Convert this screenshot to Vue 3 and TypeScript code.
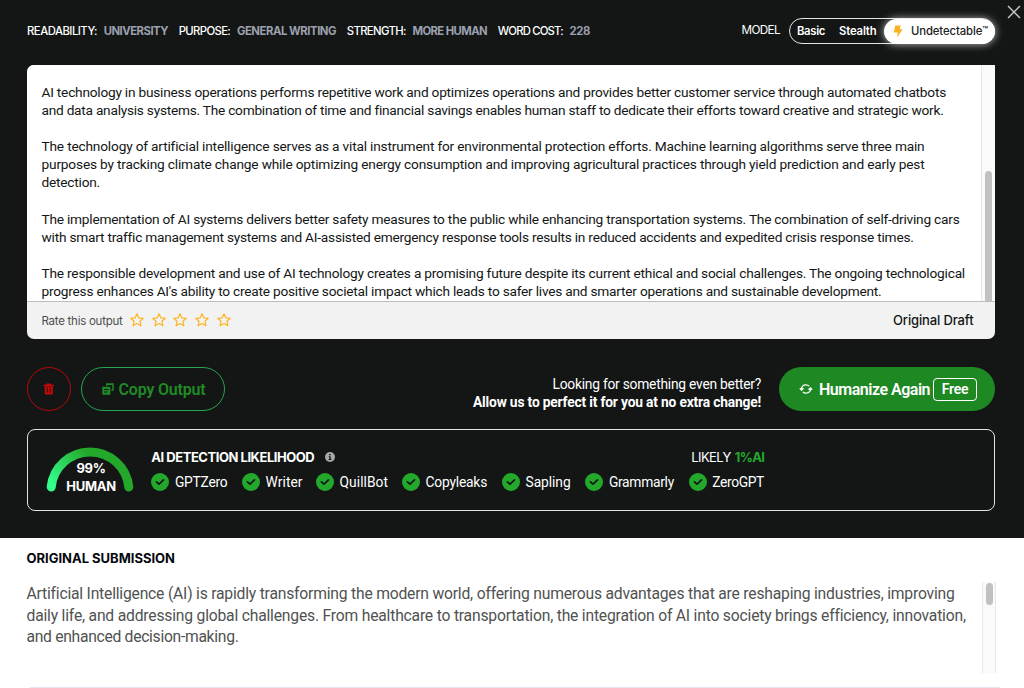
<script setup lang="ts">
import type { Directive } from 'vue'

interface Line { text: string; width: number }

/* Tracks a line of text so that it occupies the given measure. */
const vFit: Directive<HTMLElement, number> = {
  mounted(el, { value }) {
    const natural = el.getBoundingClientRect().width
    const count = (el.textContent ?? '').trim().length
    if (count > 0) el.style.letterSpacing = `${(value - natural) / count}px`
  },
}

const settings = [
  { label: 'READABILITY:', lw: 70, value: 'UNIVERSITY', vw: 64.3 },
  { label: 'PURPOSE:', lw: 51.5, value: 'GENERAL WRITING', vw: 99.2 },
  { label: 'STRENGTH:', lw: 59, value: 'MORE HUMAN', vw: 74.7 },
  { label: 'WORD COST:', lw: 65, value: '228', vw: 20.5 },
]

const paragraphs: Line[][] = [
  [
    { text: 'AI technology in business operations performs repetitive work and optimizes operations and provides better customer service through automated chatbots', width: 904.5 },
    { text: 'and data analysis systems. The combination of time and financial savings enables human staff to dedicate their efforts toward creative and strategic work.', width: 901.5 },
  ],
  [
    { text: 'The technology of artificial intelligence serves as a vital instrument for environmental protection efforts. Machine learning algorithms serve three main', width: 882.5 },
    { text: 'purposes by tracking climate change while optimizing energy consumption and improving agricultural practices through yield prediction and early pest', width: 883 },
    { text: 'detection.', width: 58.5 },
  ],
  [
    { text: 'The implementation of AI systems delivers better safety measures to the public while enhancing transportation systems. The combination of self-driving cars', width: 918 },
    { text: 'with smart traffic management systems and AI-assisted emergency response tools results in reduced accidents and expedited crisis response times.', width: 871 },
  ],
  [
    { text: 'The responsible development and use of AI technology creates a promising future despite its current ethical and social challenges. The ongoing technological', width: 923.5 },
    { text: "progress enhances AI's ability to create positive societal impact which leads to safer lives and smarter operations and sustainable development.", width: 840 },
  ],
]

const original: Line[] = [
  { text: 'Artificial Intelligence (AI) is rapidly transforming the modern world, offering numerous advantages that are reshaping industries, improving', width: 927.5 },
  { text: 'daily life, and addressing global challenges. From healthcare to transportation, the integration of AI into society brings efficiency, innovation,', width: 938 },
  { text: 'and enhanced decision-making.', width: 212 },
]

const detectors: Line[] = [
  { text: 'GPTZero', width: 52.5 },
  { text: 'Writer', width: 37 },
  { text: 'QuillBot', width: 48.5 },
  { text: 'Copyleaks', width: 61.5 },
  { text: 'Sapling', width: 45 },
  { text: 'Grammarly', width: 65 },
  { text: 'ZeroGPT', width: 51.7 },
]
</script>

<template>
  <div class="page">
    <section class="dark">
      <svg class="close" viewBox="0 0 14 14"><path d="M1 1L13 13M13 1L1 13" /></svg>

      <header class="top">
        <div class="settings">
          <div v-for="s in settings" :key="s.label" class="setting">
            <span v-fit="s.lw" class="t">{{ s.label }}</span>
            <b v-fit="s.vw" class="t">{{ s.value }}</b>
          </div>
        </div>
        <div class="model">
          <span v-fit="38.5" class="t model-label">MODEL</span>
          <div class="toggle">
            <span v-fit="28" class="t basic">Basic</span>
            <span v-fit="37.5" class="t stealth">Stealth</span>
            <div class="active">
              <svg class="bolt" viewBox="0 0 10 13"><path d="M2.2 .6H7.6L6.7 4.3H9.6L4 12.7L4.8 7.5H.8Z" /></svg>
              <span v-fit="77" class="t">Undetectable<sup>™</sup></span>
            </div>
          </div>
        </div>
      </header>

      <div class="card">
        <div class="card-body">
          <div class="copy">
            <p v-for="(p, i) in paragraphs" :key="i">
              <span v-for="l in p" :key="l.text" class="row"><span v-fit="l.width" class="t">{{ l.text }}</span></span>
            </p>
          </div>
          <div class="track"><div class="thumb"></div></div>
        </div>
        <div class="card-foot">
          <span v-fit="81" class="t rate">Rate this output</span>
          <div class="stars">
            <svg v-for="n in 5" :key="n" viewBox="0 0 14 14"><path d="M7 .8L8.8 4.8L13.3 5.3L10 8.2L10.9 12.8L7 10.6L3.1 12.8L4 8.2L.7 5.3L5.2 4.8Z" /></svg>
          </div>
          <span v-fit="80.5" class="t draft">Original Draft</span>
        </div>
      </div>

      <div class="actions">
        <button class="trash" type="button" aria-label="Delete">
          <svg viewBox="0 0 12 12">
            <path d="M3.4 1.1Q3.4 .3 4.2 .3H7.8Q8.6 .3 8.6 1.1V1.5H11.5V3H.5V1.5H3.4Z" />
            <path fill-rule="evenodd" d="M1.7 3.3H10.3V10.5Q10.3 11.7 9.2 11.7H2.8Q1.7 11.7 1.7 10.5ZM4 4.8V9.8H5V4.8ZM7 4.8V9.8H8V4.8Z" />
          </svg>
        </button>
        <button class="copy-btn" type="button">
          <svg viewBox="0 0 12 12">
            <path d="M4 .3H11.7V7.7H9.3V6.2H10.2V1.9H5.5V2.7H4Z" />
            <path fill-rule="evenodd" d="M.3 3.7H8.3V11.7H.3ZM2 6V7H6.6V6ZM2 8.4V9.4H5.4V8.4Z" />
          </svg>
          <span v-fit="87" class="t">Copy Output</span>
        </button>
        <div class="pitch">
          <div><span v-fit="208.5" class="t">Looking for something even better?</span></div>
          <div><b v-fit="288" class="t">Allow us to perfect it for you at no extra change!</b></div>
        </div>
        <button class="humanize" type="button">
          <svg viewBox="0 0 14 12"><path d="M2.6 6.6C2.2 3.6 4.2 1.8 6.8 1.8C8.2 1.8 9.3 2.2 10.1 3.1M.8 5.2L2.6 7L4.5 5.2M11.4 5.4C11.8 8.4 9.8 10.2 7.2 10.2C5.8 10.2 4.7 9.8 3.9 8.9M9.5 6.8L11.4 5L13.2 6.8" /></svg>
          <span v-fit="111" class="t">Humanize Again</span>
          <span class="free"><span v-fit="26.5" class="t">Free</span></span>
        </button>
      </div>

      <div class="detect">
        <div class="gauge">
          <svg viewBox="0 0 88 46">
            <defs>
              <linearGradient id="arc" gradientUnits="userSpaceOnUse" x1="8" y1="40" x2="43" y2="8">
                <stop offset="0" stop-color="#35ff8c" />
                <stop offset="1" stop-color="#23a82b" />
              </linearGradient>
            </defs>
            <path d="M5.2 40A39 39 0 0 1 82.8 40" />
          </svg>
          <div class="score"><span v-fit="29" class="t">99%</span><span v-fit="49.5" class="t">HUMAN</span></div>
        </div>
        <div class="results">
          <div class="heading">
            <b v-fit="163" class="t">AI DETECTION LIKELIHOOD</b>
            <svg viewBox="0 0 10 10"><circle cx="5" cy="5" r="5" /><path d="M4.2 2H5.8V3.3H4.2ZM3.7 4.2H5.7V7H6.4V8H3.6V7H4.3V5.1H3.7Z" /></svg>
            <div class="likely"><span v-fit="39.5" class="t">LIKELY</span><b v-fit="29.5" class="t">1%AI</b></div>
          </div>
          <div class="detectors">
            <div v-for="d in detectors" :key="d.text" class="detector">
              <svg viewBox="0 0 18 18"><circle cx="9" cy="9" r="9" /><path d="M5.4 8.8L8 11.1L12.5 6.8" /></svg>
              <span v-fit="d.width" class="t">{{ d.text }}</span>
            </div>
          </div>
        </div>
      </div>
    </section>

    <section class="light">
      <h2><span v-fit="148.5" class="t">ORIGINAL SUBMISSION</span></h2>
      <div class="submission">
        <div class="sub-text">
          <div v-for="l in original" :key="l.text" class="sub-row"><span v-fit="l.width" class="t">{{ l.text }}</span></div>
        </div>
        <div class="sub-track"><div class="sub-thumb"></div></div>
      </div>
      <div class="rule"></div>
    </section>
  </div>
</template>

<style>
html, body { margin: 0; overflow: hidden; background: #fff; }
</style>

<style scoped>
.page { width: 1024px; height: 688px; overflow: hidden; font-family: Inter, "Liberation Sans", sans-serif; font-size: 13.2px; color: #131615; }
.page * { box-sizing: border-box; }
.t { display: inline-block; white-space: nowrap; flex: none; }
svg { display: block; flex: none; }
button { font: inherit; padding: 0; margin: 0; background: none; display: flex; align-items: center; }
p { margin: 0; }

.dark { position: relative; height: 538px; background: #131615; padding: 18px 29px 0 27px; color: #fff; }
.close { position: absolute; right: 3px; top: 5px; width: 14px; height: 14px; fill: none; stroke: #c9cbca; stroke-width: 1.4; }

.top { display: flex; justify-content: space-between; align-items: center; height: 26px; }
.settings { display: flex; gap: 10.7px; font-size: 11.3px; line-height: 27px; font-weight: 500; padding-top: 1px; }
.setting { display: flex; gap: 6.7px; }
.setting b { color: #9ca0ae; font-weight: 700; }
.model { display: flex; align-items: center; gap: 9px; line-height: 25px; }
.model-label { font-size: 11.7px; margin-top: -1px; }
.toggle { display: flex; width: 206px; height: 26px; border: 1px solid #e4e5e5; border-radius: 13px; padding-left: 7px; font-weight: 600; font-size: 11.3px; }
.stealth { margin-left: 14px; }
.active { display: flex; align-items: center; width: 111px; height: 25px; margin: -0.5px -1px 0 auto; padding-left: 8.5px; gap: 8.5px; background: #fff; border-radius: 13px; color: #202322; font-weight: 500; box-shadow: 0 0 8px rgba(255, 255, 255, .75); }
.bolt { width: 10px; height: 13px; fill: #fbb01e; }
sup { font-size: 9.5px; line-height: 0; vertical-align: 2px; }

.card { margin-top: 21px; height: 273.5px; border-radius: 7px 0 7px 7px; overflow: hidden; background: #f2f2f2; color: #131615; }
.card-body { display: flex; height: 236px; background: #fff; overflow: hidden; }
.copy { flex: 1; padding: 18px 0 0 14.5px; font-family: Roboto, "Liberation Sans", sans-serif; font-size: 13.7px; }
.copy p { margin-bottom: 18.1px; }
.row { display: block; height: 18.1px; line-height: 18.1px; }
.track { width: 14px; flex: none; background: #fafafa; border-left: 1px solid #e8e8e8; }
.thumb { width: 7px; height: 136px; margin: 106px 0 0 3px; border-radius: 4px; background: #c1c1c1; }
.card-foot { display: flex; align-items: center; height: 37.5px; border-top: 1px solid #bdbfbf; padding: 1px 21.5px 0 14.5px; }
.rate { font-size: 11.5px; color: #4c4e4d; }
.stars { display: flex; gap: 7.7px; margin-left: 7.5px; }
.stars svg { width: 14px; height: 14px; fill: none; stroke: #fbb521; stroke-width: 1.2; stroke-linejoin: round; margin-top: -2px; }
.draft { margin-left: auto; font-size: 13px; font-weight: 500; margin-top: -2px; }

.actions { display: flex; align-items: center; height: 44px; margin-top: 28.5px; }
.trash { width: 44px; height: 44px; border: 1px solid #b80808; border-radius: 50%; justify-content: center; }
.trash svg { width: 11.5px; height: 12px; fill: #c40707; }
.copy-btn { width: 144px; height: 44px; margin-left: 10px; border: 1px solid #28a350; border-radius: 22px; padding-left: 19.5px; gap: 5px; color: #1f8b25; font-family: Roboto, "Liberation Sans", sans-serif; font-size: 16px; font-weight: 600; }
.copy-btn svg { width: 12px; height: 12px; fill: #1f8b25; }
.pitch { margin-left: auto; text-align: right; line-height: 18px; padding-top: 7px; font-family: Roboto, "Liberation Sans", sans-serif; font-size: 13.8px; }
.pitch b { font-weight: 700; }
.humanize { width: 216px; height: 44px; margin-left: 18px; border: 0; border-radius: 22px; background: #1e8823; color: #fff; padding-left: 20px; font-family: Roboto, "Liberation Sans", sans-serif; font-size: 16px; font-weight: 600; }
.humanize svg { width: 14px; height: 12px; fill: none; stroke: #fff; stroke-width: 1.3; margin-right: 6px; }
.free { margin-left: 3px; width: 44px; height: 23px; border: 1px solid #fff; border-radius: 4px; display: flex; align-items: center; justify-content: center; font-size: 14px; font-weight: 600; }

.detect { display: flex; height: 81.5px; margin-top: 18px; border: 1px solid #e2e3e3; border-radius: 8px; padding: 17px 0 0 17.5px; }
.gauge { position: relative; width: 88px; height: 46px; }
.gauge svg { width: 88px; height: 46px; fill: none; }
.gauge path { stroke: url(#arc); stroke-width: 9; stroke-linecap: round; }
.score { position: absolute; inset: 12px 0 0 3px; display: flex; flex-direction: column; align-items: center; line-height: 18px; font-size: 13px; font-weight: 700; }
.results { margin-left: 17.8px; }
.heading { display: flex; align-items: center; width: 613px; height: 20px; font-size: 13px; }
.heading svg { width: 10px; height: 10px; margin-left: 11px; fill: #131615; }
.heading circle { fill: #a7a9a8; }
.likely { display: flex; gap: 4px; margin-left: auto; }
.likely b { color: #23a82b; }
.detectors { display: grid; grid-template-columns: 90.7px 74px 86px 100px 83.3px 103.4px 76px; margin-top: 6px; height: 18px; }
.detector { display: flex; align-items: center; gap: 5.6px; font-family: Roboto, "Liberation Sans", sans-serif; font-size: 13.8px; }
.detector svg { width: 18px; height: 18px; }
.detector circle { fill: #23a82b; }
.detector path { fill: none; stroke: #131615; stroke-width: 1.7; stroke-linecap: round; stroke-linejoin: round; }

.light { height: 150px; padding: 10px 24px 0 26.5px; background: #fff; }
h2 { margin: 0; font-size: 13px; line-height: 20px; font-weight: 700; color: #05080d; }
.submission { display: flex; justify-content: space-between; height: 91px; margin-top: 14px; }
.sub-text { padding-top: 1px; font-family: Roboto, "Liberation Sans", sans-serif; font-size: 15.7px; color: #505251; }
.sub-row { height: 21.7px; line-height: 21.7px; }
.sub-track { width: 14px; height: 91px; margin-right: 4px; background: #fafafa; border: 1px solid #e8e8e8; border-width: 0 1px; }
.sub-thumb { width: 7px; height: 22px; margin: 1px 0 0 3px; border-radius: 4px; background: #c1c1c1; }
.rule { height: 1px; margin: 14px 0 0 3.5px; background: #e4e6ef; }
</style>
